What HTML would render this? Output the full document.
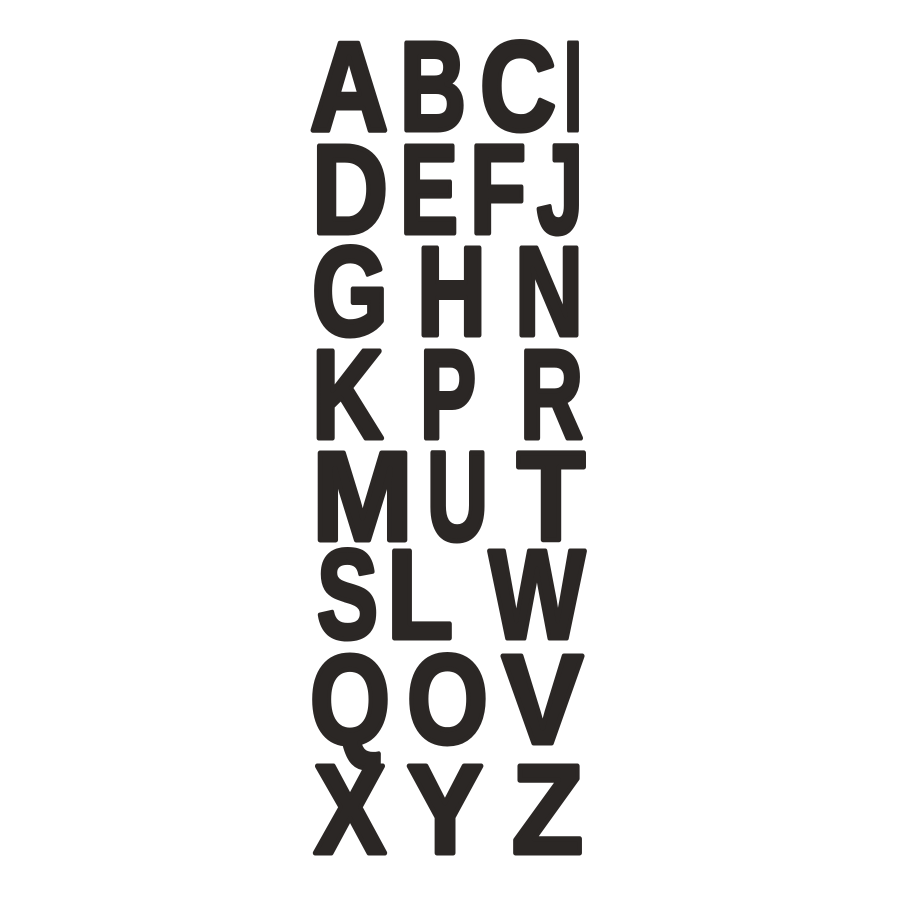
<!DOCTYPE html>
<html><head><style>
html,body{margin:0;padding:0;background:#fff;}
svg{display:block}
text{font-family:"Liberation Sans",sans-serif;font-weight:bold;font-size:126px;fill:#2b2725;stroke:#2b2725;stroke-width:5;stroke-linejoin:round;}
</style></head><body>
<svg width="900" height="900" viewBox="0 0 900 900">
<text x="310" y="130" textLength="78" lengthAdjust="spacingAndGlyphs">A</text>
<text x="400" y="130" textLength="66" lengthAdjust="spacingAndGlyphs">B</text>
<text x="480" y="130" textLength="76" lengthAdjust="spacingAndGlyphs">C</text>
<text x="564" y="130" textLength="18" lengthAdjust="spacingAndGlyphs">I</text>

<text x="312" y="233" textLength="76" lengthAdjust="spacingAndGlyphs">D</text>
<text x="400" y="233" textLength="58" lengthAdjust="spacingAndGlyphs">E</text>
<text x="470" y="233" textLength="56" lengthAdjust="spacingAndGlyphs">F</text>
<text x="537" y="233" textLength="46" lengthAdjust="spacingAndGlyphs">J</text>

<text x="312" y="335" textLength="76" lengthAdjust="spacingAndGlyphs">G</text>
<text x="417" y="335" textLength="69" lengthAdjust="spacingAndGlyphs">H</text>
<text x="515" y="335" textLength="68" lengthAdjust="spacingAndGlyphs">N</text>

<text x="312" y="438" textLength="71" lengthAdjust="spacingAndGlyphs">K</text>
<text x="420" y="438" textLength="56" lengthAdjust="spacingAndGlyphs">P</text>
<text x="520" y="438" textLength="63" lengthAdjust="spacingAndGlyphs">R</text>

<text x="312" y="540" textLength="101" lengthAdjust="spacingAndGlyphs">M</text>
<text x="427" y="540" textLength="61" lengthAdjust="spacingAndGlyphs">U</text>
<text x="517" y="540" textLength="68" lengthAdjust="spacingAndGlyphs">T</text>

<text x="317" y="638" textLength="61" lengthAdjust="spacingAndGlyphs">S</text>
<text x="387" y="638" textLength="66" lengthAdjust="spacingAndGlyphs">L</text>
<text x="489" y="638" textLength="96" lengthAdjust="spacingAndGlyphs">W</text>

<text x="310" y="743" textLength="80" lengthAdjust="spacingAndGlyphs">Q</text>
<text x="407" y="743" textLength="81" lengthAdjust="spacingAndGlyphs">O</text>
<text x="502" y="743" textLength="81" lengthAdjust="spacingAndGlyphs">V</text>

<text x="314" y="853" textLength="72" lengthAdjust="spacingAndGlyphs">X</text>
<text x="407" y="853" textLength="76" lengthAdjust="spacingAndGlyphs">Y</text>
<text x="512" y="853" textLength="71" lengthAdjust="spacingAndGlyphs">Z</text>
</svg>
</body></html>
